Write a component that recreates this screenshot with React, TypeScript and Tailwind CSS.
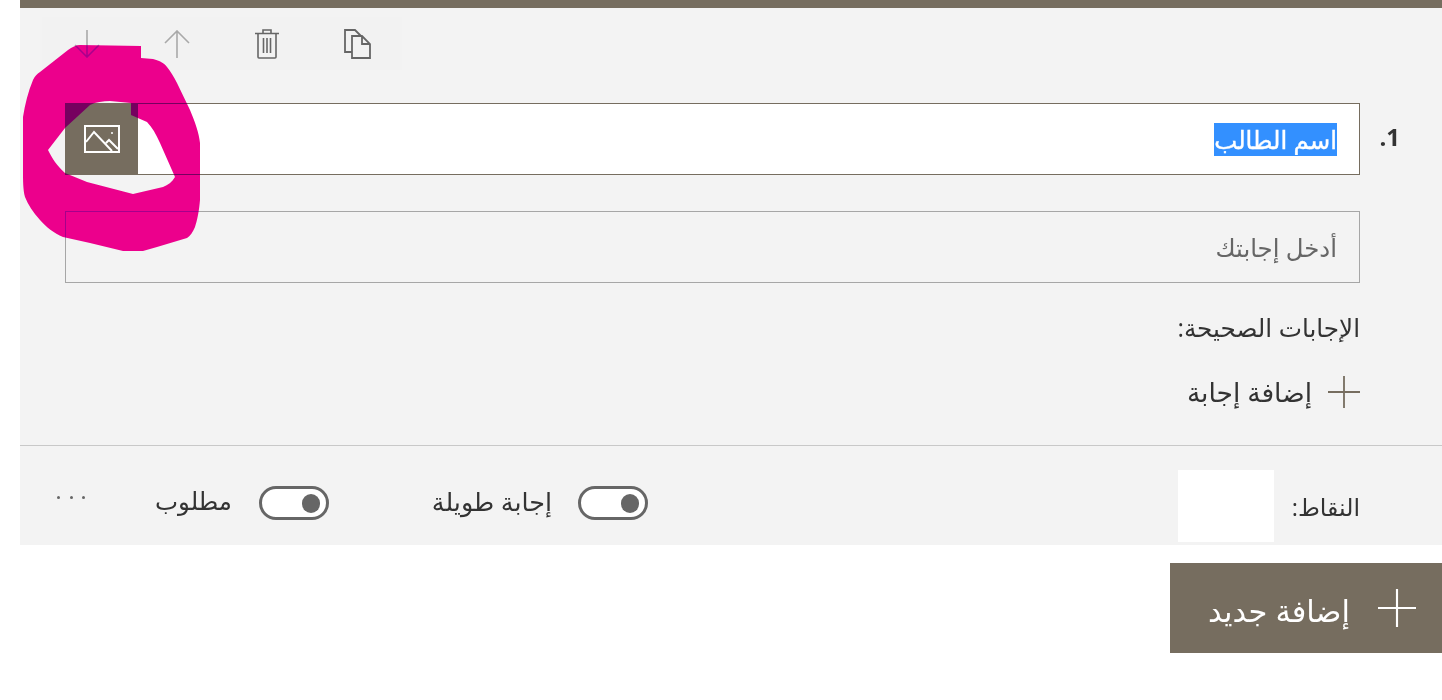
import React from "react";

const arabic = "font-['Open_Sans','DejaVu_Sans',sans-serif]";

const ArrowIcon = ({ up }: { up?: boolean }) => (
  <svg width="26" height="28" viewBox="0 0 26 28" fill="none" stroke="#a9a9a9" strokeWidth="1.6">
    {up ? (
      <path d="M13 28V1M1 13L13 1l12 12" />
    ) : (
      <path d="M13 0v27M1 15l12 12 12-12" />
    )}
  </svg>
);

const TrashIcon = () => (
  <svg width="24" height="30" viewBox="0 0 24 30" fill="none" stroke="#666666" strokeWidth="1.6">
    <path d="M0 4.500h24M8 4.500V1h8v3.500M3 4.500V28a1 1 0 0 0 1 1h16a1 1 0 0 0 1-1V4.500M8.500 9v15M12 9v15M15.500 9v15" />
  </svg>
);

const CopyIcon = () => (
  <svg width="27" height="30" viewBox="0 0 27 30" fill="none" stroke="#666666" strokeWidth="1.800">
    <path d="M8 23H1V1h10l6 6" />
    <path d="M8 7h10l8 8v14H8zM18 7v8h8" />
  </svg>
);

const ImageIcon = () => (
  <svg width="36" height="28" viewBox="0 0 36 28" fill="none" stroke="#ffffff" strokeWidth="2">
    <path d="M1 1h34v26H1z" />
    <path d="M2 17l8-10 18 19M22 18l3-3 9 9" />
    <circle cx="28" cy="8" r="1" fill="#ffffff" stroke="none" />
  </svg>
);

const PlusIcon = ({ size, color }: { size: number; color: string }) => (
  <svg width={size} height={size} viewBox="0 0 32 32" fill="none" stroke={color} strokeWidth="1.8">
    <path d="M16 0v32M0 16h32" />
  </svg>
);

const Toggle = () => (
  <div className="flex h-[34px] w-[70px] shrink-0 items-center rounded-full border-[3px] border-[#666666] bg-white pr-[6px]">
    <div className="h-[19px] w-[18px] rounded-full bg-[#666666]" />
  </div>
);

const Scribble = () => (
  <svg
    className="pointer-events-none absolute left-0 top-0 mix-blend-darken"
    width="210"
    height="260"
    viewBox="0 0 210 260"
  >
    <path
      fillRule="evenodd"
      fill="#ec008c"
      d="M80 45L141 46L141 58L153 59C160 61 164 63 167 67C171 72 174 77 177 83L190 110C195 122 199 133 200 143L200 200C199 212 197 221 195 227C193 232 190 236 187 238L157 247L143 251L123 251L90 243L63 237C54 233 46 227 40 220C33 212 28 205 25 197C23 190 23 180 23 170L23 117C25 104 28 92 33 80C35 76 37 74 40 72L68 50C72 47 76 45 80 45Z
      M48 150L65 128L90 105C96 102 103 101 110 101L131 103L131 115L147 122C152 127 156 134 160 143L175 177C172 182 168 185 163 187L133 194L87 182L65 173C57 166 52 158 48 150Z"
    />
  </svg>
);

export default function App() {
  return (
    <div dir="rtl" className={`relative h-[700px] w-[1442px] overflow-hidden bg-white pl-[20px] ${arabic}`}>
      <div className="border-t-[8px] border-[#766d5f] bg-[#f3f3f3]">
        <div className="flex justify-end pl-[22px] pt-[9px]">
          <div className="flex h-[53px] bg-[#f2f2f2]">
            <div className="flex w-[90px] items-center justify-center pt-[1px]"><CopyIcon /></div>
            <div className="flex w-[90px] items-center justify-center pt-[1px]"><TrashIcon /></div>
            <div className="flex w-[90px] items-center justify-center pt-[1px]"><ArrowIcon up /></div>
            <div className="flex w-[90px] items-center justify-center pt-[1px]"><ArrowIcon /></div>
          </div>
        </div>

        <div className="mt-[33px] flex">
          <div className="w-[82px] pt-[19px] pr-[42px] text-[24px] font-bold leading-[30px] text-[#333333]">1.</div>
          <div className="flex-1 pl-[45px]">
            <div className="flex h-[72px] items-center justify-between border border-[#766d5f] bg-white pr-[22px]">
              <span className="bg-[#3390ff] text-[24.400px] leading-[33px] text-white [-webkit-text-stroke:0.4px_white]">اسم الطالب</span>
              <div className="flex h-[72px] w-[72px] items-center justify-center bg-[#766d5f]"><ImageIcon /></div>
            </div>

            <div className="mt-[36px] flex h-[72px] items-center border border-[#a6a6a6] pr-[22px] pt-[3px] text-[24.400px] text-[#666666]">
              أدخل إجابتك
            </div>

            <div className="mt-[30px] text-[24.700px] leading-[30px] text-[#333333]">الإجابات الصحيحة:</div>

            <div className="mt-[33px] flex items-center gap-[16px] text-[26.500px] leading-[32px] text-[#333333]">
              <PlusIcon size={32} color="#766d5f" />
              <span>إضافة إجابة</span>
            </div>
          </div>
        </div>

        <div className="mt-[37px] flex h-[100px] border-t border-[#c8c8c8] pr-[82px] pt-[24px] text-[#333333]">
          <div className="flex h-[72px] items-center gap-[17px] text-[23.700px]">
            <span className="w-[69px] shrink-0 whitespace-nowrap pt-[4px]">النقاط:</span>
            <div className="h-[72px] w-[96px] bg-white" />
          </div>
          <div className="mr-[530px] flex h-[66px] items-center gap-[26px] text-[25.400px]">
            <Toggle />
            <span className="w-[120px] shrink-0 whitespace-nowrap pb-[4px]">إجابة طويلة</span>
          </div>
          <div className="mr-[103px] flex h-[66px] items-center gap-[27px] text-[24.500px]">
            <Toggle />
            <span className="w-[77px] shrink-0 whitespace-nowrap pb-[4px]">مطلوب</span>
          </div>
          <div className="mr-[70px] mt-[23px] flex h-[8px] w-[28px] items-center justify-between">
            <div className="h-[3px] w-[3px] rounded-full bg-[#666666]" />
            <div className="h-[3px] w-[3px] rounded-full bg-[#666666]" />
            <div className="h-[3px] w-[3px] rounded-full bg-[#666666]" />
          </div>
        </div>
      </div>

      <div className="mt-[18px] flex h-[90px] w-[272px] items-center gap-[28px] bg-[#766d5f] pr-[26px] text-[30.500px] text-white">
        <PlusIcon size={38} color="#ffffff" />
        <span className="pt-[6px]">إضافة جديد</span>
      </div>

      <Scribble />
    </div>
  );
}
